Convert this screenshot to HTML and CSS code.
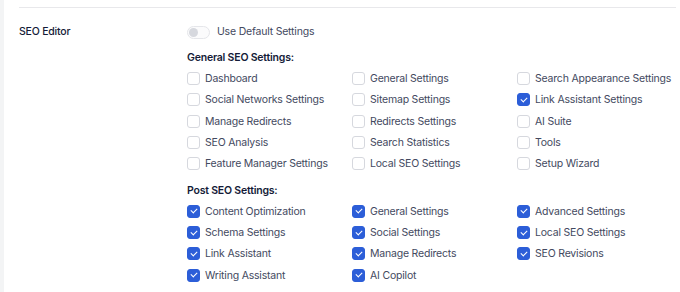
FILE: index.html
```html
<!DOCTYPE html>
<html lang="en">
<head>
  <meta charset="UTF-8" />
  <title>SEO Editor</title>
  <link rel="stylesheet" href="styles.css">
</head>
<body>

<div class="page">
  <div class="sidebar"></div>

  <div class="settings">
    <div class="setting-row">
      <div class="setting-label">SEO Editor</div>

      <div class="setting-body">
        <label class="toggle-row">
          <span class="toggle"><span class="knob"></span></span>
          Use Default Settings
        </label>

        <h3>General SEO Settings:</h3>
        <div class="options">
          <label class="opt"><span class="box"></span>Dashboard</label>
          <label class="opt"><span class="box"></span>General Settings</label>
          <label class="opt"><span class="box"></span>Search Appearance Settings</label>
          <label class="opt"><span class="box"></span>Social Networks Settings</label>
          <label class="opt"><span class="box"></span>Sitemap Settings</label>
          <label class="opt"><span class="box checked"></span>Link Assistant Settings</label>
          <label class="opt"><span class="box"></span>Manage Redirects</label>
          <label class="opt"><span class="box"></span>Redirects Settings</label>
          <label class="opt"><span class="box"></span>AI Suite</label>
          <label class="opt"><span class="box"></span>SEO Analysis</label>
          <label class="opt"><span class="box"></span>Search Statistics</label>
          <label class="opt"><span class="box"></span>Tools</label>
          <label class="opt"><span class="box"></span>Feature Manager Settings</label>
          <label class="opt"><span class="box"></span>Local SEO Settings</label>
          <label class="opt"><span class="box"></span>Setup Wizard</label>
        </div>

        <h3 class="post">Post SEO Settings:</h3>
        <div class="options">
          <label class="opt"><span class="box checked"></span>Content Optimization</label>
          <label class="opt"><span class="box checked"></span>General Settings</label>
          <label class="opt"><span class="box checked"></span>Advanced Settings</label>
          <label class="opt"><span class="box checked"></span>Schema Settings</label>
          <label class="opt"><span class="box checked"></span>Social Settings</label>
          <label class="opt"><span class="box checked"></span>Local SEO Settings</label>
          <label class="opt"><span class="box checked"></span>Link Assistant</label>
          <label class="opt"><span class="box checked"></span>Manage Redirects</label>
          <label class="opt"><span class="box checked"></span>SEO Revisions</label>
          <label class="opt"><span class="box checked"></span>Writing Assistant</label>
          <label class="opt"><span class="box checked"></span>AI Copilot</label>
        </div>
      </div>
    </div>
  </div>
</div>

</body>
</html>
```

FILE: styles.css
```css
* {
  box-sizing: border-box;
}
body {
  margin: 0;
  font-family: Inter, 'Noto Sans', sans-serif;
  font-size: 10.5px;
  letter-spacing: -0.2px;
  color: #141b38;
  background: #fff;
  overflow: hidden;
}
.page {
  display: flex;
  min-height: 292px;
}
.sidebar {
  flex: none;
  width: 4px;
  background: #f3f4f5;
}
.settings {
  flex: 1;
  min-width: 0;
  margin: 7px 4px 0 15px;
  border-top: 1px solid #e8e8eb;
}
.setting-row {
  display: flex;
  padding-top: 14px;
}
.setting-label {
  flex: none;
  width: 168px;
  font-weight: 500;
  line-height: 20px;
}
.setting-body {
  flex: 1;
}
.toggle-row {
  display: flex;
  align-items: center;
  gap: 7px;
  line-height: 20px;
  color: #434960;
}
.toggle {
  width: 23px;
  height: 13px;
  border: 1px solid #e5e6ea;
  border-radius: 7px;
  background: #fbfbfc;
  display: flex;
  align-items: center;
  padding-left: 1px;
}
.knob {
  width: 9px;
  height: 9px;
  border-radius: 50%;
  background: #d6d8de;
}
h3 {
  margin: 6px 0 0;
  font-size: 10.5px;
  font-weight: 600;
  line-height: 20px;
}
h3.post {
  margin-top: 6px;
}
.options {
  display: grid;
  grid-template-columns: 165px 165px 1fr;
  grid-auto-rows: 21.33px;
}
.opt {
  display: flex;
  align-items: center;
  gap: 5px;
  color: #434960;
  white-space: nowrap;
}
.box {
  width: 13px;
  height: 13px;
  border: 1px solid #d6d8de;
  border-radius: 3px;
  background: #fff;
  flex: none;
  display: flex;
  align-items: center;
  justify-content: center;
}
.box.checked {
  background: #2c5ed8;
  border-color: #2c5ed8;
}
.box.checked::after {
  content: '';
  width: 5px;
  height: 3px;
  border-left: 1.8px solid #fff;
  border-bottom: 1.8px solid #fff;
  transform: translateY(-1px) rotate(-45deg);
}
```
